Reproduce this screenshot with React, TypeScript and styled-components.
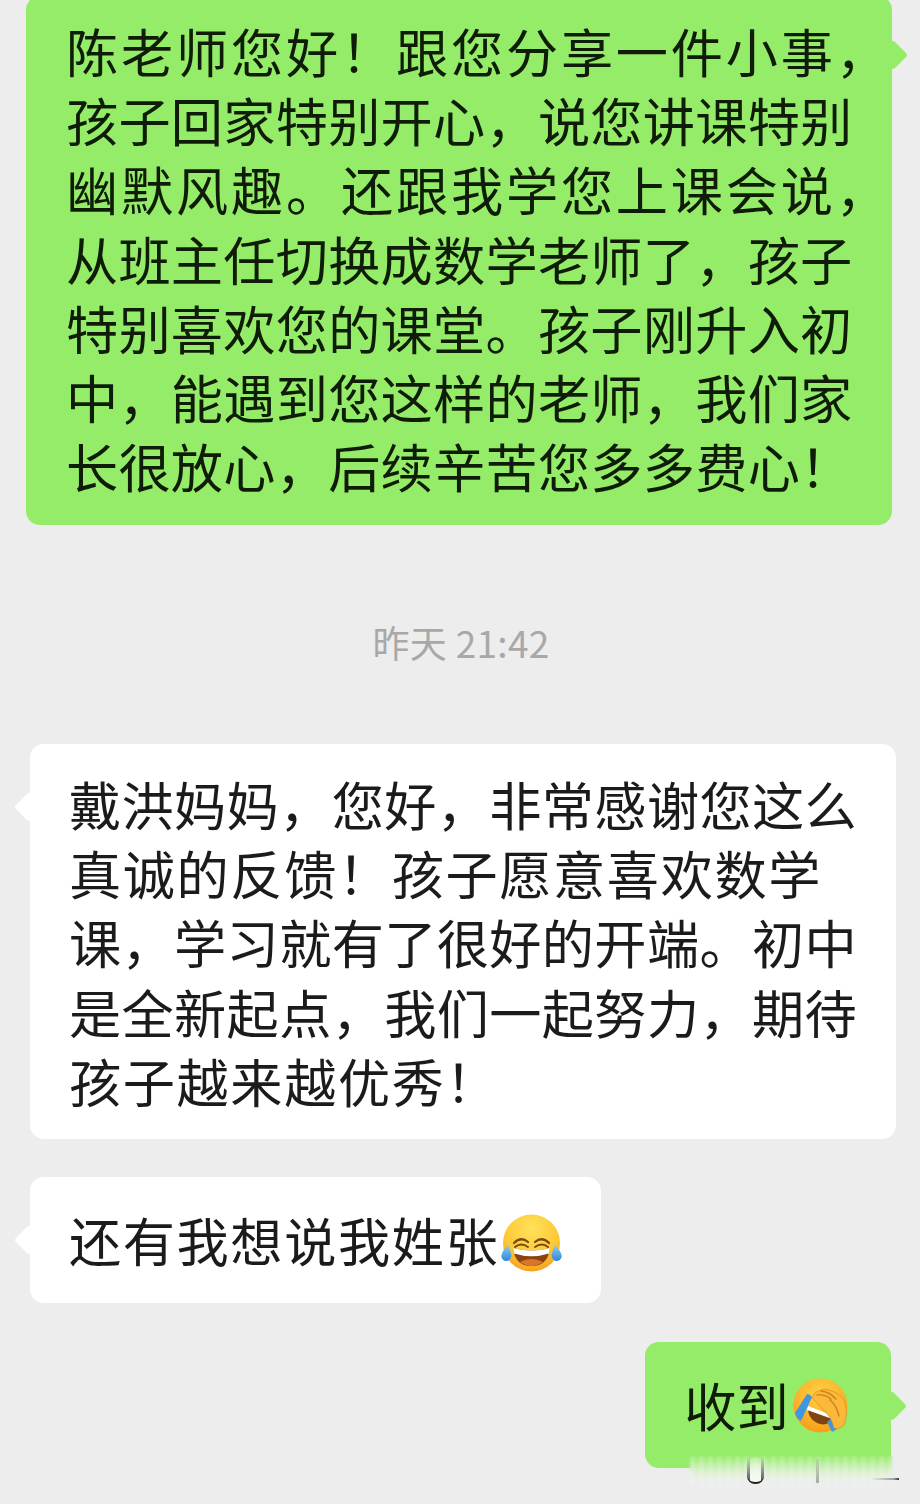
import React from "react";
import styled, { createGlobalStyle } from "styled-components";

const Global = createGlobalStyle`
  html, body { margin: 0; padding: 0; background: #ededed; }
  #root { width: 920px; height: 1504px; overflow: hidden; }
`;

const Page = styled.div`
  position: relative;
  width: 920px;
  height: 1504px;
  overflow: hidden;
  background: #ededed;
  font-family: "Noto Sans CJK SC", "Noto Sans", sans-serif;
  text-spacing-trim: space-all;
`;

const Row = styled.div<{ $mine?: boolean; $gap: number; $right?: number }>`
  display: flex;
  justify-content: ${(p) => (p.$mine ? "flex-end" : "flex-start")};
  margin-top: ${(p) => p.$gap}px;
  padding: ${(p) => (p.$mine ? `0 ${p.$right ?? 28}px 0 0` : "0 0 0 30px")};
`;

const Bubble = styled.div<{ $mine?: boolean; $wide?: boolean; $arrowTop: number; $pad: string }>`
  position: relative;
  box-sizing: border-box;
  width: ${(p) => (p.$wide ? "866px" : "auto")};
  padding: ${(p) => p.$pad};
  border-radius: 14px;
  background: ${(p) => (p.$mine ? "#95ec69" : "#ffffff")};
  color: ${(p) => (p.$mine ? "#0e1c08" : "#1b1b1b")};
  font-size: 52.2px;
  line-height: 69.2px;

  &::after {
    content: "";
    position: absolute;
    top: ${(p) => p.$arrowTop}px;
    ${(p) => (p.$mine ? "right: -14px;" : "left: -14px;")}
    width: 26px;
    height: 26px;
    background: inherit;
    transform: rotate(45deg) scale(0.82);
    border-radius: 4px;
  }
`;

const Line = styled.div<{ $ls?: number }>`
  white-space: nowrap;
  letter-spacing: ${(p) => p.$ls ?? 0.25}px;
`;

const Time = styled.div`
  margin-top: 90px;
  height: 54px;
  line-height: 54px;
  text-align: center;
  font-size: 37px;
  letter-spacing: 0.3px;
  color: #a8a8a8;
  padding-left: 2px;
`;

const Emoji = styled.svg<{ $drop: number; $left?: number }>`
  display: inline-block;
  width: 64px;
  height: 64px;
  vertical-align: ${(p) => -p.$drop}px;
  margin-left: ${(p) => p.$left ?? 0}px;
`;

const Watermark = styled.div`
  position: absolute;
  left: 690px;
  top: 1456px;
  width: 202px;
  height: 28px;
  filter: blur(1px);
  background:
    repeating-linear-gradient(
      90deg,
      rgba(255, 255, 255, 0.16) 0 5px,
      rgba(255, 255, 255, 0) 5px 9px
    ),
    linear-gradient(180deg, #95ec69 0, #bdeea3 30%, #dcf0d0 58%, #e9efe5 80%, #ededed 100%);
`;

const Cup = styled.div`
  position: absolute;
  left: 747px;
  top: 1458px;
  box-sizing: border-box;
  width: 17px;
  height: 26px;
  border-bottom: 2px solid #222;
  border-radius: 0 0 8px 8px;
  background:
    linear-gradient(180deg, rgba(50, 50, 50, 0.1), rgba(50, 50, 50, 0.85)) left / 3px 100% no-repeat,
    linear-gradient(180deg, rgba(50, 50, 50, 0.1), rgba(50, 50, 50, 0.85)) right / 3px 100% no-repeat,
    linear-gradient(180deg, rgba(255, 255, 255, 0.2), #f8f8f4);
  filter: blur(0.6px);
`;

const Tick = styled.div`
  position: absolute;
  left: 816px;
  top: 1459px;
  width: 3px;
  height: 24px;
  background: linear-gradient(180deg, rgba(120, 120, 120, 0.15), rgba(120, 120, 120, 0.6));
  filter: blur(0.6px);
`;

const Stroke = styled.div`
  position: absolute;
  left: 872px;
  top: 1478px;
  width: 27px;
  height: 2px;
  background: linear-gradient(90deg, rgba(120, 120, 120, 0.05), #a0a0a0 80%, #333);
`;

const Laugh = () => (
  <Emoji viewBox="0 0 64 64" $drop={14}>
    <defs>
      <radialGradient id="lf" cx="50%" cy="25%" r="80%">
        <stop offset="0" stopColor="#ffe25a" />
        <stop offset="0.6" stopColor="#fdc834" />
        <stop offset="1" stopColor="#f29c1e" />
      </radialGradient>
      <linearGradient id="lt" x1="0" y1="0" x2="0" y2="1">
        <stop offset="0" stopColor="#8ccdf5" />
        <stop offset="1" stopColor="#2f86d8" />
      </linearGradient>
    </defs>
    <circle cx="32.5" cy="31" r="28.5" fill="url(#lf)" />
    <path d="M14 36 Q32.5 41 51 36 Q49 54 32.5 54 Q16 54 14 36Z" fill="#8a4310" />
    <path d="M14 36 Q32.5 41 51 36 L50 41.5 Q32.5 47 15 41.5Z" fill="#fff" />
    <path d="M21 50 Q32.5 44 44 50 Q38 54 32.5 54 Q27 54 21 50Z" fill="#d9762a" />
    <path d="M15 31 Q22 24 29 30" fill="none" stroke="#7a4a12" strokeWidth="2.2" strokeLinecap="round" />
    <path d="M16 35 Q22 30 29 35" fill="none" stroke="#7a4a12" strokeWidth="2" strokeLinecap="round" />
    <path d="M36 30 Q43 24 50 31" fill="none" stroke="#7a4a12" strokeWidth="2.2" strokeLinecap="round" />
    <path d="M36 35 Q43 30 49 35" fill="none" stroke="#7a4a12" strokeWidth="2" strokeLinecap="round" />
    <path d="M9 33 Q12 40 12.3 43 A5 5.5 0 0 1 2.2 44 Q3 39 9 33Z" fill="url(#lt)" />
    <path d="M56 33 Q53 40 52.7 43 A5 5.5 0 0 0 62.8 44 Q62 39 56 33Z" fill="url(#lt)" />
  </Emoji>
);

const FacePalm = () => (
  <Emoji viewBox="4 3 64 64" $drop={10} $left={-1}>
    <defs>
      <radialGradient id="ff" cx="50%" cy="30%" r="75%">
        <stop offset="0" stopColor="#ffd445" />
        <stop offset="1" stopColor="#f79a16" />
      </radialGradient>
    </defs>
    <circle cx="36.3" cy="35.5" r="27" fill="url(#ff)" />
    <path d="M24 38 Q24 50 36 54 Q44 56 49 49Z" fill="#7f4310" />
    <path d="M24 36 L47 45 L47 48.5 L23 40Z" fill="#fff" />
    <path d="M11 43 L23 24 Q26 24 28 27 L17 51 Q12 48 11 43Z" fill="#3f97e0" />
    <path d="M43 52 L48 48 L53 59 L48 62Z" fill="#3f97e0" />
    <path d="M30 24 Q33 20 42 19 Q55 22 60 30 Q65 42 60 55 Q55 60 50 58 Q48 50 45 46 Q38 38 28 28Z" fill="#fcb838" stroke="#e08a1d" strokeWidth="0.7" />
    <path d="M33 25 Q41 24 47 29 M37 21 Q46 22 52 29 M46 30 Q53 36 55 46" fill="none" stroke="#cf7f1f" strokeWidth="1.4" strokeLinecap="round" />
  </Emoji>
);

export default function App() {
  return (
    <Page>
      <Global />
      <Row $mine $gap={-4}>
        <Bubble $mine $wide $arrowTop={46} $pad="20px 40px 24.6px 40px">
          <Line $ls={2.8}>陈老师您好！跟您分享一件小事，</Line>
          <Line>孩子回家特别开心，说您讲课特别</Line>
          <Line $ls={2.8}>幽默风趣。还跟我学您上课会说，</Line>
          <Line>从班主任切换成数学老师了，孩子</Line>
          <Line>特别喜欢您的课堂。孩子刚升入初</Line>
          <Line>中，能遇到您这样的老师，我们家</Line>
          <Line>长很放心，后续辛苦您多多费心！</Line>
        </Bubble>
      </Row>
      <Time>昨天 21:42</Time>
      <Row $gap={75}>
        <Bubble $wide $arrowTop={50} $pad="25px 40px 24px 39px">
          <Line $ls={0.35}>戴洪妈妈，您好，非常感谢您这么</Line>
          <Line $ls={1.6}>真诚的反馈！孩子愿意喜欢数学</Line>
          <Line $ls={0.35}>课，学习就有了很好的开端。初中</Line>
          <Line $ls={0.35}>是全新起点，我们一起努力，期待</Line>
          <Line $ls={1.6}>孩子越来越优秀！</Line>
        </Bubble>
      </Row>
      <Row $gap={38}>
        <Bubble $arrowTop={50} $pad="28px 38px 26.6px 39px">
          <Line $ls={1.6}>还有我想说我姓张<Laugh /></Line>
        </Bubble>
      </Row>
      <Row $mine $right={29} $gap={39}>
        <Bubble $mine $arrowTop={51} $pad="28px 39px 29px 39px">
          <Line>收到<FacePalm /></Line>
        </Bubble>
      </Row>
      <Watermark />
      <Cup />
      <Tick />
      <Stroke />
    </Page>
  );
}
